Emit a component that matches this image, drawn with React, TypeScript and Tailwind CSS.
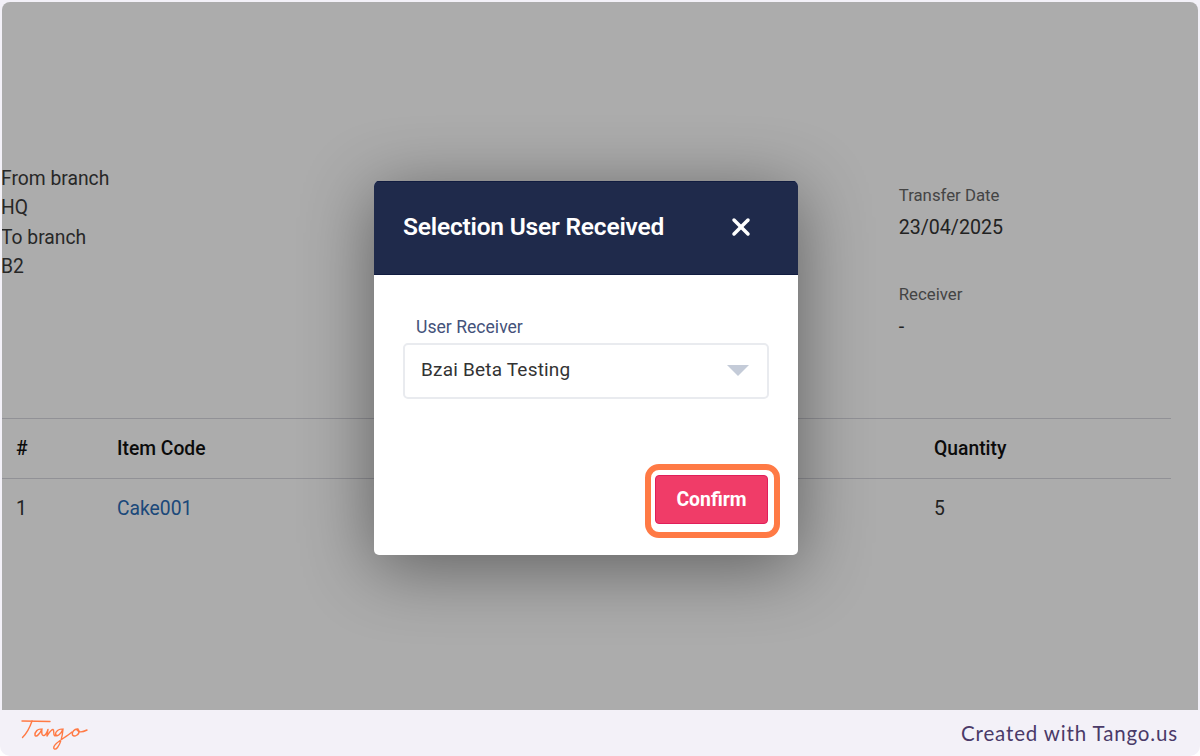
import { X } from "lucide-react";

function TangoLogo() {
  return (
    <svg width="70" height="34" viewBox="0 -1 70 34" fill="none" stroke="#ff7a45" strokeWidth="1.4" strokeLinecap="round" strokeLinejoin="round" aria-hidden>
      <path d="M2 4 L30 4.5" />
      <path d="M12 4 C10 10 7 16 2.5 20.5" />
      <path d="M22 12.5 C18 11 14.5 15 15 18.5 C16 20.5 20 17 22 12 C21.5 15 21.5 19 24 18.5 C26 18 27 15 28 12.5 C27.5 15 27 17 27 19 C29 16 31 12.5 33 12.5 C34.5 13 33 17 34.5 18.5 C35.5 19 36 18.5 36.5 18" />
      <path d="M43 12.5 C39 11 35 15 35.5 18 C37 20.5 41 17 43 12 C42.5 18 41 26 37.5 30.5 C35.5 33 33 32.5 34 29.5 C35.5 25 45 21 52 15" />
      <path d="M58 12 C54.5 11.5 51.5 15 52.5 18 C54.5 20.5 59.5 17.5 59 14 C58.5 12 57 12 56.5 12.5 C58 15 62 15.5 67 13" />
    </svg>
  );
}

export default function App() {
  return (
    <div className="flex h-[756px] w-[1200px] flex-col overflow-hidden rounded-b-[10px] bg-[#f3f1f8] font-['Roboto',sans-serif]">
      <div className="relative mx-[2px] mt-[2px] h-[708px] overflow-hidden rounded-t-[8px] bg-white">
        {/* page behind the dialog */}
        <div className="flex justify-between pt-[162px] pr-[195px]">
          <div className="-ml-px text-[19.3px] leading-[29.4px] text-[#3a3a3a]">
            <p>From branch</p>
            <p>HQ</p>
            <p>To branch</p>
            <p>B2</p>
          </div>
          <div className="pt-[21px]">
            <p className="text-[16.8px] leading-[20px] text-[#666666]">Transfer Date</p>
            <p className="mt-[12px] text-[19.6px] leading-[22px] text-[#333333]">23/04/2025</p>
            <p className="mt-[45px] text-[16.8px] leading-[20px] text-[#666666]">Receiver</p>
            <p className="mt-[12px] text-[19.6px] leading-[22px] text-[#333333]">-</p>
          </div>
        </div>
        <div className="mt-[80.4px] mr-[27px] text-[19.3px]">
          <div className="flex h-[61px] items-center border-y border-[#d8d8de] pt-[2px] font-medium text-[#111111]">
            <span className="w-[115px] pl-[14px]">#</span>
            <span className="w-[817px]">Item Code</span>
            <span>Quantity</span>
          </div>
          <div className="flex h-[59px] items-center pt-[2px] text-[#333333]">
            <span className="w-[115px] pl-[14px]">1</span>
            <span className="w-[817px] text-[#2a6bb5]">Cake001</span>
            <span>5</span>
          </div>
        </div>

        <div className="absolute inset-0 bg-black/[0.325]" />

        {/* dialog */}
        <div className="absolute top-[179px] left-[372px] flex h-[374px] w-[424px] flex-col overflow-hidden rounded-[5px] bg-white shadow-[0_12px_70px_rgba(0,0,0,0.45)]">
          <div className="flex h-[94px] items-center justify-between border-y border-[#111c40] bg-[#1f2a4b] pr-[43px] pb-[2px] pl-[29px]">
            <h2 className="text-[24.5px] font-semibold tracking-[-0.2px] text-white">Selection User Received</h2>
            <X className="size-[28px] text-white" strokeWidth={3} />
          </div>
          <div className="flex flex-1 flex-col px-[29px] pt-[42px]">
            <label className="pl-[13px] text-[17.6px] leading-[20px] text-[#44527a]">User Receiver</label>
            <div className="mt-[6px] flex h-[56px] w-[366px] items-center justify-between rounded-[5px] border-2 border-[#e9ebef] pr-[18px] pb-[2px] pl-[16px]">
              <span className="text-[19px] tracking-[0.2px] text-[#333333]">Bzai Beta Testing</span>
              <span className="h-0 w-0 border-x-[11px] border-t-[11px] border-x-transparent border-t-[#c4cbd8]" />
            </div>
            <div className="mt-[76px] flex justify-end pr-[1px]">
              <button className="flex h-[49px] w-[113px] items-center justify-center rounded-[4px] border border-[#e01e5a] bg-[#f03c68] text-[19.4px] font-bold text-white">
                Confirm
              </button>
            </div>
          </div>
        </div>

        {/* step highlight around the button */}
        <div className="absolute top-[462px] left-[643px] h-[74px] w-[135px] rounded-[14px] border-[6px] border-[#ff7a45]" />
      </div>

      <div className="flex flex-1 items-center justify-between pr-[22px] pl-[20px]">
        <TangoLogo />
        <span className="font-['Lato',sans-serif] text-[20.5px] tracking-[0.85px] text-[#4a3a68]">Created with Tango.us</span>
      </div>
    </div>
  );
}
